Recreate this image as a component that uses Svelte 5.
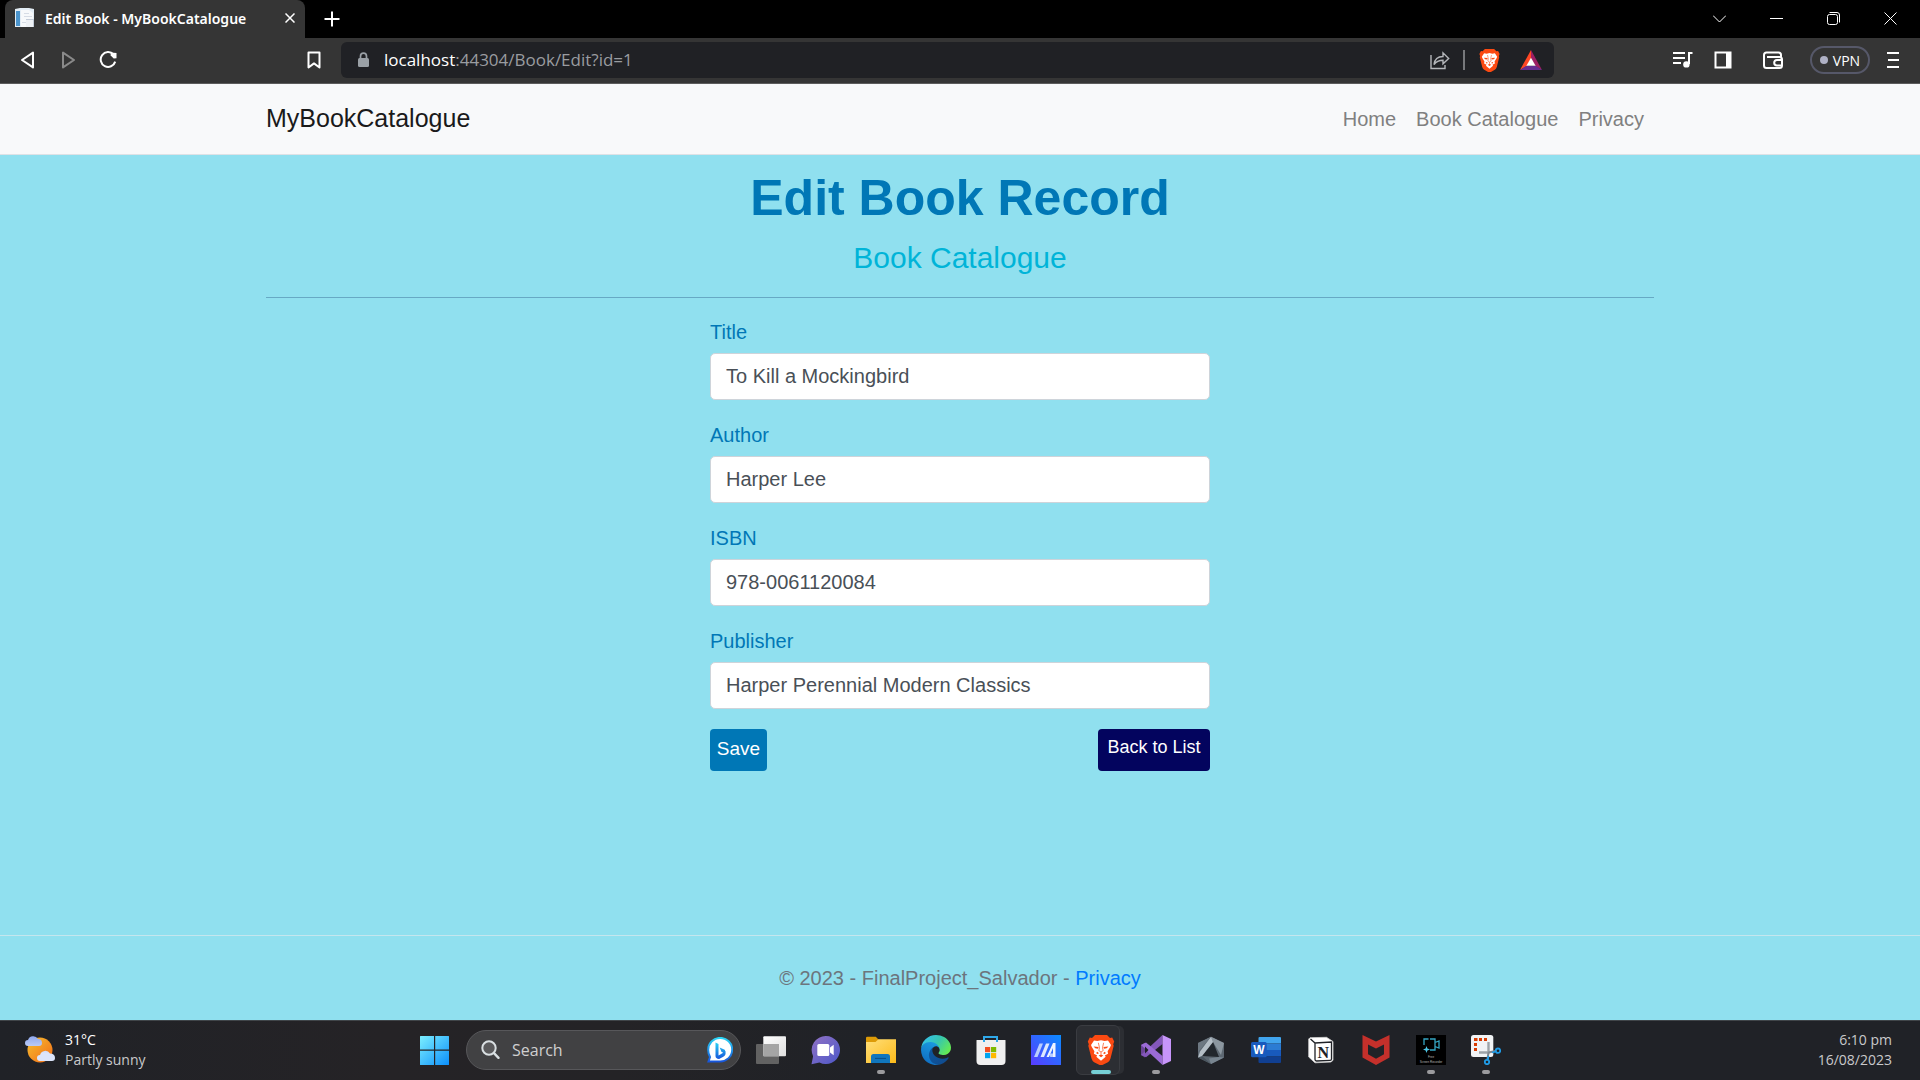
<script>
  let fields = $state([
    { id: 'title', label: 'Title', value: 'To Kill a Mockingbird' },
    { id: 'author', label: 'Author', value: 'Harper Lee' },
    { id: 'isbn', label: 'ISBN', value: '978-0061120084' },
    { id: 'publisher', label: 'Publisher', value: 'Harper Perennial Modern Classics' }
  ]);
  const links = ['Home', 'Book Catalogue', 'Privacy'];
</script>

{#snippet lion()}
  <path fill="#fb4a12" d="M9 0h12l3 3 2.2-.4 2 4-1 2.6.5 1.6-3.2 12.6q-.8 2.6-2.6 3.8l-4.5 2.4q-2.4 1.2-4.8 0l-4.5-2.4q-1.8-1.2-2.6-3.8L2.3 10.8l.5-1.6-1-2.6 2-4L6 3z" />
  <path fill="#fff" d="M8 5.6l3.4.5L15 5.3l3.6.8 3.4-.5 3 4.4-.8 2-2.6 4.2.5 2.6-3.3 1.7.9 1.3-4.7 3.9-4.7-3.9.9-1.3-3.3-1.7.5-2.6-2.6-4.2-.8-2z" />
  <path fill="#fb4a12" d="M7.6 11.4l5 .5-.5 1.9-2.8-.5zM22.4 11.4l-5 .5.5 1.9 2.8-.5zM11.2 16.8l1.8 1.4-1.8.8-1-1.1zM18.8 16.8l-1.8 1.4 1.8.8 1-1.1zM12.7 20.6l2.3-1 2.3 1-2.3 1.700z" />
  <path fill="none" stroke="#fb4a12" stroke-width=".7" d="M12.4 7.8l1.1 5-.7 2.800L15 17l2.200-1.400-.7-2.800 1.100-5M15 17v2.600" />
{/snippet}

<div class="desktop">
  <div class="tabs">
    <div class="tab">
      <svg class="fav" viewBox="0 0 20 20"><path fill="#e3edf5" d="M0 1l5-1h9l5 1v18H0z" /><path fill="#4b94cc" d="M1 3h4v15H1z" /><path fill="#f7f9fb" d="M6 2h8l4 3v14H6z" /><path fill="#d6dce5" d="M9 5h5v1H9zM9 8h8v1H9zM7 14h5v1H7z" /><path fill="#c3ccd8" d="M11 11h8v8h-8z" /><path fill="#eef1f5" d="M11 12h7v7h-7z" /></svg>
      <span class="tabname">Edit Book - MyBookCatalogue</span>
      <button class="plain x" aria-label="Close tab"><svg width="10" height="10" viewBox="0 0 10 10"><path class="ln" d="M0.5 0.5l9 9M9.5 0.5l-9 9" /></svg></button>
    </div>
    <button class="plain new" aria-label="New tab"><svg width="16" height="16" viewBox="0 0 16 16"><path class="ln2" d="M8 0.5v15M0.5 8h15" /></svg></button>
    <div class="win">
      <button class="plain" aria-label="Search tabs"><svg width="13" height="13" viewBox="0 0 13 13"><path class="thin" d="M0 3.5l6.5 6.5L13 3.5" /></svg></button>
      <button class="plain" aria-label="Minimize"><svg width="13" height="13" viewBox="0 0 13 13"><path class="thin" d="M0 6.5h13" /></svg></button>
      <button class="plain" aria-label="Restore"><svg width="13" height="13" viewBox="0 0 13 13"><rect class="thin" x=".5" y="2.5" width="10" height="10" rx="2" /><path class="thin" d="M2.5.5H10q2.5 0 2.5 2.5v7.5" /></svg></button>
      <button class="plain" aria-label="Close"><svg width="13" height="13" viewBox="0 0 13 13"><path class="thin" d="M.5.5l12 12M12.5.5l-12 12" /></svg></button>
    </div>
  </div>

  <div class="toolbar">
    <div class="navs">
      <button class="plain" aria-label="Back"><svg width="18" height="18" viewBox="0 0 18 18"><path class="ln2" stroke-linejoin="round" d="M14 1.6v14.8L3 9z" /></svg></button>
      <button class="plain dim" aria-label="Forward"><svg width="18" height="18" viewBox="0 0 18 18"><path class="ln2" stroke-linejoin="round" d="M4 1.6v14.8L15 9z" /></svg></button>
      <button class="plain" aria-label="Reload"><svg width="18" height="18" viewBox="0 0 18 18"><path class="ln2" d="M14.5 3.4A7.4 7.4 0 1 0 16.2 10.6" /><path fill="#fff" d="M11.6 1.6L17.5 2v5.2l-2.8.2-3-2.8z" /></svg></button>
    </div>
    <button class="plain mark" aria-label="Bookmark"><svg width="14" height="18" viewBox="0 0 14 18"><path class="ln2" stroke-linejoin="round" d="M1.5 1.5h11v15L7 12.4l-5.5 4.1z" /></svg></button>
    <div class="address">
      <svg width="11" height="16" viewBox="0 0 11 16"><rect y="6" width="11" height="9" rx="1.5" fill="#9aa0a6" /><path fill="none" stroke="#9aa0a6" stroke-width="1.7" d="M2.5 7V4.2a3 3 0 0 1 6 0V7" /></svg>
      <span class="url"><b>localhost</b>:44304/Book/Edit?id=1</span>
      <button class="plain" aria-label="Share"><svg width="20" height="20" viewBox="0 0 20 20"><path fill="none" stroke="#b4b6ba" stroke-width="1.4" d="M1 5v13.5h14V15M4 14.5q1-8 9-8V2.8l5.7 5.6L13 13.8v-3.6q-6 0-9 4.3z" /></svg></button>
      <i class="bar"></i>
      <button class="plain shield" aria-label="Brave Shields"><svg width="23" height="23" viewBox="0 0 30 30">{@render lion()}</svg></button>
      <button class="plain bat" aria-label="Rewards"><svg width="22" height="20" viewBox="0 0 22 20"><path fill="#ff4724" d="M11 0L0 20l7-4 4-7.5z" /><path fill="#9e1f63" d="M11 0l11 20-7-4-4-7.5z" /><path fill="#662d91" d="M0 20h22l-6-4H6z" /><path fill="#fff" d="M11 7.7l4.6 8H6.4z" /></svg></button>
    </div>
    <div class="tools">
      <button class="plain" aria-label="Media"><svg width="20" height="18" viewBox="0 0 20 18"><path class="ln2" d="M0 2h12M0 7h12M0 12h8M19.5 2H16v11" /><circle cx="13.4" cy="13.4" r="3.2" fill="#fff" /></svg></button>
      <button class="plain panel" aria-label="Side panel"><svg width="18" height="18" viewBox="0 0 18 18"><rect x="1.5" y="1.5" width="15" height="15" class="ln2" /><path fill="#fff" d="M12 1h5v16h-5z" /></svg></button>
      <button class="plain wallet" aria-label="Wallet"><svg width="20" height="18" viewBox="0 0 20 18"><path class="ln2" d="M18 6V4Q18 1.500 15.500 1.500H3.500Q1 1.500 1 4v10.500Q1 17 3.500 17h13Q19 17 19 14.500V8.500Q19 6 16.500 6H4" /><path class="ln2" d="M19 9h-5a2.800 2.800 0 0 0 0 5.600h5" /></svg></button>
      <button class="vpn"><i></i>VPN</button>
      <button class="plain menu" aria-label="Menu"><svg width="12" height="18" viewBox="0 0 12 18"><path class="ln2" d="M0 2h12M1 9h11M0 16h12" /></svg></button>
    </div>
  </div>

  <div class="page">
    <header>
      <div class="container bar-row">
        <a class="brand" href="#home">MyBookCatalogue</a>
        <nav>
          {#each links as l}<a href="#{l}">{l}</a>{/each}
        </nav>
      </div>
    </header>
    <main class="container">
      <h1>Edit Book Record</h1>
      <h4>Book Catalogue</h4>
      <hr />
      <form onsubmit={(e) => e.preventDefault()}>
        {#each fields as f}
          <div class="field">
            <label for={f.id}>{f.label}</label>
            <input id={f.id} type="text" bind:value={f.value} />
          </div>
        {/each}
        <div class="actions">
          <button class="save" type="submit">Save</button>
          <a class="back" href="#list">Back to List</a>
        </div>
      </form>
    </main>
    <footer>© 2023 - FinalProject_Salvador - <a href="#privacy">Privacy</a></footer>
  </div>

  <div class="taskbar">
    <div class="weather">
      <svg width="30" height="30" viewBox="0 0 30 30"><defs><linearGradient id="sun" x1="0" y1="0" x2="1" y2="1"><stop stop-color="#f5bf2f" /><stop offset="1" stop-color="#f36b16" /></linearGradient><linearGradient id="cl" x1="0" y1="0" x2="0" y2="1"><stop stop-color="#8fa8ee" /><stop offset=".7" stop-color="#dce5fb" /></linearGradient></defs><circle cx="15" cy="15" r="12.500" fill="url(#sun)" /><path fill="url(#cl)" d="M3 11a3 3 0 0 1 0-6 5.500 5.500 0 0 1 10-1q4 0 4 4 0 3-3 3zM15 26a3 3 0 0 1 0-6 5.500 5.500 0 0 1 10-1.500q5 0 5 4.500 0 3-3 3z" /></svg>
      <div><span class="temp">31°C</span><span>Partly sunny</span></div>
    </div>
    <div class="apps">
      <button class="app" aria-label="Start"><svg viewBox="0 0 30 30"><defs><linearGradient id="st" x1="0" y1="0" x2="1" y2="1"><stop stop-color="#7cefff" /><stop offset="1" stop-color="#0c8ffb" /></linearGradient></defs><path fill="url(#st)" d="M0 1.500Q0 1 .5 1h13.500v13.600H0zM15.200 1h13.300q.5 0 .5.500v13.100H15.200zM0 15.800h14V30H.5q-.5 0-.5-.5zM15.200 15.800H29v13.700q0 .5-.5.5H15.200z" /></svg></button>
      <button class="search">
        <svg width="19" height="20" viewBox="0 0 19 20"><circle cx="8" cy="8" r="6.700" fill="#ffffff22" stroke="#d9dfe2" stroke-width="2" /><path stroke="#d9dfe2" stroke-width="2.400" stroke-linecap="round" d="M13 13.200l4.500 4.600" /></svg>
        <span>Search</span>
        <svg width="26" height="26" viewBox="0 0 26 26"><defs><linearGradient id="bg" x1="0" y1="0" x2="0" y2="1"><stop stop-color="#2bd4f4" /><stop offset="1" stop-color="#1756dc" /></linearGradient></defs><path fill="#fff" stroke="url(#bg)" stroke-width="2" d="M1.200 13A12 11.800 0 1 1 13 24.500H1.500L3 20q-1.800-3-1.800-7z" /><path fill="url(#bg)" d="M8.500 5.500l3 1.500v11.500l6.800-4q1.200 3.600-2 5.200l-4.200 2.200q-3.600-.3-3.600-3zM12.700 10.500l5 2.200q1.700 2 .3 4l-3.600-2z" /></svg>
      </button>
      <button class="app" aria-label="Task view"><svg viewBox="0 0 30 30"><defs><linearGradient id="tv" x1="0" y1="0" x2="1" y2="1"><stop stop-color="#fff" /><stop offset="1" stop-color="#dedede" /></linearGradient></defs><rect y="9" width="23" height="20" rx="1" fill="#626262" /><rect x="7.300" y="1.300" width="22.700" height="20" rx="1" fill="url(#tv)" /><path fill="#a5a5a5" d="M7.300 9H23v12.300H7.300z" /></svg></button>
      <button class="app" aria-label="Chat"><svg viewBox="0 0 30 30"><defs><linearGradient id="ch" x1="0" y1="0" x2="1" y2="1"><stop stop-color="#9172c4" /><stop offset="1" stop-color="#4c57c9" /></linearGradient></defs><path fill="url(#ch)" d="M15 1a14 14 0 1 1-6.500 26.400L.5 29.200l1.600-8A14 14 0 0 1 15 1z" /><rect x="6.300" y="9" width="12" height="12" rx="1.500" fill="#fff" /><path fill="#fff" d="M19 12.500l3.700-2.800v10.600L19 17.500z" /></svg></button>
      <button class="app run" aria-label="File Explorer"><svg viewBox="0 0 30 30"><defs><linearGradient id="fo" x1="0" y1="0" x2="1" y2="1"><stop stop-color="#ffdf7a" /><stop offset="1" stop-color="#fcba19" /></linearGradient></defs><path fill="#dd9b07" d="M0 3q0-1.300 1.300-1.300h8.500L12.500 4.500V10H0z" /><path fill="url(#fo)" d="M0 7h9.500l3-2.700H30V28H0z" /><path fill="#1076bd" d="M5 28v-6.500q0-2.500 2.500-2.500h14q2.500 0 2.500 2.500V28z" /><path stroke="#0a4f87" stroke-width="1" d="M9 23.400h11" /></svg></button>
      <button class="app" aria-label="Edge"><svg viewBox="0 0 256 256"><defs><linearGradient id="e1" x1="0" y1="0" x2="1" y2="1"><stop stop-color="#0c59a4" /><stop offset="1" stop-color="#114a8b" /></linearGradient><linearGradient id="e2" x1=".7" y1="0" x2=".3" y2="1"><stop stop-color="#1b9de2" /><stop offset="1" stop-color="#0f6cc0" /></linearGradient><linearGradient id="e3" x1="0" y1=".2" x2="1" y2=".7"><stop stop-color="#35c1f1" /><stop offset=".5" stop-color="#36c6b0" /><stop offset="1" stop-color="#66eb4f" /></linearGradient></defs><path fill="url(#e1)" d="M231 190.500c-3.400 1.800-6.900 3.400-10.500 4.700a101.500 101.500 0 0 1-35.800 6.400c-47.200 0-88.300-32.400-88.300-74.100a31.600 31.600 0 0 1 16.400-27.500c-42.700 1.800-53.700 46.300-53.700 72.400 0 73.700 67.900 81.200 82.500 81.200 7.900 0 19.800-2.300 27-4.600l1.300-.4A128.300 128.300 0 0 0 236 195.300a4 4 0 0 0-5-4.800z" /><path fill="url(#e2)" d="M105.700 241.400A79.200 79.200 0 0 1 83 220a80.700 80.700 0 0 1 29.600-120c3.200-1.400 8.500-4.100 15.600-4 10.200.1 19.800 5 25.800 13.200a31.800 31.800 0 0 1 6.400 18.700c0-.2 24.500-79.600-80-79.600-44 0-80.100 41.700-80.100 78.200a130.200 130.200 0 0 0 12.100 56 128.200 128.200 0 0 0 156.400 67.100 75.500 75.500 0 0 1-62.800-8.200z" /><path fill="url(#e3)" d="M152.400 148.900c-.9 1-3.400 2.500-3.400 5.600 0 2.600 1.700 5.200 4.800 7.300 14.300 10 41.400 8.600 41.500 8.600 10.700 0 21.100-2.900 30.300-8.300a61.400 61.400 0 0 0 30.400-52.900c.3-22.400-8-37.300-11.300-43.900C223.400 23.800 177.700 0 128 0A128 128 0 0 0 0 126.200c.5-36.500 36.800-66 80-66 3.500 0 23.500.3 42 10a72.600 72.600 0 0 1 30.900 29.300c6.100 10.600 7.200 24.100 7.200 29.500s-2.700 13.300-7.700 19.900z" /></svg></button>
      <button class="app" aria-label="Microsoft Store"><svg viewBox="0 0 30 30"><path fill="none" stroke="#2fa9ea" stroke-width="2" d="M8 7V2h13v5" /><path fill="#f0f0f0" d="M1 5h28q.5 0 .5.500V26q0 4-4 4h-21q-4 0-4-4V5.500Q.5 5 1 5z" /><path fill="none" stroke="#2fa9ea" stroke-width="2" d="M8 7V4M21 7V4" /><path fill="#f25022" d="M9 12h5.200v5.200H9z" /><path fill="#7fba00" d="M15 12h5.200v5.200H15z" /><path fill="#00a4ef" d="M9 18h5.200v5.200H9z" /><path fill="#ffb900" d="M15 18h5.200v5.200H15z" /></svg></button>
      <button class="app" aria-label="MyASUS"><svg viewBox="0 0 30 30"><defs><linearGradient id="as" x1="0" y1="1" x2="1" y2="0"><stop stop-color="#5a3bff" /><stop offset="1" stop-color="#0a8cff" /></linearGradient></defs><path fill="url(#as)" d="M0 0h30v30H0z" /><path fill="#b9cdff" d="M3 22L8.500 8.500H12L6.500 22z" /><path fill="#dce7ff" d="M9.500 22L15 8.500h3.500L13 22z" /><path fill="#eef4ff" d="M15.500 22l6.500-14h2.500v14h-2.500v-9L18 22z" /><path fill="#b9cdff" d="M18.800 18.500H22V22h-2.800z" /></svg></button>
      <button class="app active" aria-label="Brave"><svg viewBox="0 0 30 30">{@render lion()}</svg></button>
      <button class="app run" aria-label="Visual Studio"><svg viewBox="0 0 30 30"><path fill="#6b4497" d="M0 10l4-2.300V22.500L0 20z" /><path fill="#8458bb" d="M21.500 0v9L5 22.300 0 20z" /><path fill="#9b6bd6" d="M21.500 30v-9L5 7.500 0 10z" /><path fill="#c795fa" d="M21.500 0L30 4v22l-8.500 4z" /><path fill="#202227" d="M4 11.500v7L7.500 15z" /></svg></button>
      <button class="app" aria-label="Armoury Crate"><svg viewBox="0 0 30 30"><path fill="#5d6872" d="M15 1.700L28 8v14.500L15 29 2 22.500V8z" /><path fill="#8b969f" d="M15 1.700L28 8l-3 12-8-13z" /><path fill="#788590" d="M28 22.500L15 29l-2-5.500 10-1.500z" /><path fill="#4a555f" d="M2 22.500L6 21l9 8z" /><path fill="#22272d" d="M17 7l6 15-17-1z" /><path fill="#b4bec6" d="M15 1.700L17 7 6 21l-4 1.500 2-6z" /><path fill="#6d7882" d="M15 1.700L2 8v9z" /></svg></button>
      <button class="app" aria-label="Word"><svg viewBox="0 0 30 30"><path fill="#41a5ee" d="M8.500 2H29q1 0 1 1v5.500H7.500V3q0-1 1-1z" /><path fill="#2b7cd3" d="M7.500 8.500H30V15H7.500z" /><path fill="#185abd" d="M7.500 15H30v6.500H7.500z" /><path fill="#103f91" d="M7.500 21.500H30V27q0 1-1 1H8.500q-1 0-1-1z" /><rect y="7" width="15.700" height="15.300" rx="1.500" fill="#185abd" /><text class="w" x="8" y="19" text-anchor="middle">W</text></svg></button>
      <button class="app" aria-label="Notion"><svg viewBox="0 0 30 30"><path fill="#fff" stroke="#d0d0d0" stroke-width=".8" d="M4 2.700l16.500-.4L27 6.500v18.800l-2 1.700-16 .8L2.700 22V4z" /><path fill="#fff" stroke="#202227" stroke-width="1.300" d="M4.500 4L9 8l16.500-1v17q0 1.300-1.300 1.300l-13.700.7q-1.500 0-1.500-1.400V8" /><text class="n" x="17.300" y="22.500" text-anchor="middle">N</text></svg></button>
      <button class="app" aria-label="McAfee"><svg viewBox="0 0 30 30"><path fill="#c4302b" fill-rule="evenodd" d="M1.500 0L15 6.500 28.500 0v22.500L15 30 1.500 22.500zM7 9.500v9.800l8 4.400 8-4.400V9.500l-8 4z" /></svg></button>
      <button class="app run" aria-label="Free Screen Recorder"><svg viewBox="0 0 30 30"><path fill="#000" d="M0 0h30v30H0z" /><path fill="none" stroke="#35a6c4" stroke-width="1.300" d="M8 10V4h4.500M14 4h5v11h-5M19 7.500l4-1.500v7l-4-1.500" /><path fill="#4cc5e4" d="M10.500 11l.9 2.600 2.600.9-2.600.9-.9 2.600-.9-2.600-2.600-.9 2.600-.9z" /><text class="tiny" x="15" y="23" text-anchor="middle">Free</text><text class="tiny" x="15" y="27.500" text-anchor="middle">Screen Recorder</text></svg></button>
      <button class="app run" aria-label="Snipping Tool"><svg viewBox="0 0 30 30"><rect width="22.300" height="22" rx="2.500" fill="#f1f3f5" /><path fill="#d83b01" d="M3 3h3.500v3H3zM8 3h3v3H8zM13 3h3v3h-3zM3 8h3v3H3zM3 13h3v3H3z" /><path fill="none" stroke="#9da3a8" stroke-width="2.400" d="M17.500 7v10.500H8" /><path stroke="#808890" stroke-width="2" d="M17.500 17.500l7-1.500M17.500 17.500L16.500 24" /><g fill="none" stroke="#1f9ce8" stroke-width="1.800"><circle cx="27" cy="15.700" r="2.200" /><circle cx="16" cy="27" r="2.200" /><path d="M21 17.500l4-1M17.500 21l-.8 4" /></g></svg></button>
    </div>
    <div class="clock"><span>6:10 pm</span><span>16/08/2023</span></div>
  </div>
</div>

<style>
  :global(body) { margin: 0; }
  .desktop { min-height: 100vh; display: flex; flex-direction: column; font-family: "Open Sans", "Noto Sans", sans-serif; background: #90e0ef; }
  .desktop * { box-sizing: border-box; }
  svg { display: block; flex: none; }
  a { text-decoration: none; }
  .plain { border: 0; padding: 0; background: none; display: flex; align-items: center; justify-content: center; }
  .ln, .ln2, .thin { fill: none; stroke: #fff; stroke-width: 1.5; }
  .ln2 { stroke-width: 2; }
  .thin { stroke-width: 1; }
  .dim .ln2 { stroke: #8a8a8a; }

  .tabs { height: 38px; background: #000; display: flex; padding-left: 5px; }
  .tab { width: 300px; background: #353535; border-radius: 8px 8px 0 0; display: flex; align-items: center; padding: 0 10px 2px; color: #fff; font-family: "Noto Sans", sans-serif; font-size: 14px; font-weight: 600; }
  .fav { width: 20px; height: 20px; margin-right: 10px; }
  .tabname { flex: 1; white-space: nowrap; }
  .new { width: 54px; }
  .win { margin-left: auto; display: flex; padding: 0 1px 2px 0; }
  .win button { width: 57px; }

  .toolbar { height: 46px; background: #353535; border-bottom: 1px solid #5c5c5c; display: flex; align-items: center; padding: 0 21px 1px 0; }
  .navs { display: flex; padding-left: 19px; gap: 22px; }
  .mark { margin-left: 190px; margin-right: 20px; }
  .address { flex: 1; height: 36px; border-radius: 6px; background: #202125; display: flex; align-items: center; padding: 0 12px 0 17px; margin-right: 119px; }
  .url { flex: 1; padding-left: 15px; color: #9a9ca0; font-size: 17px; line-height: 24px; white-space: nowrap; }
  .url b { font-weight: 400; color: #fff; }
  .bar { width: 2px; height: 20px; background: #77797c; margin: 0 13px; }
  .bat { margin-left: 19px; }
  .tools { display: flex; align-items: center; }
  .panel { margin-left: 21px; }
  .wallet { margin-left: 31px; }
  .vpn { margin: 0 17px 0 27px; width: 60px; height: 28px; border: 2px solid #565869; border-radius: 14px; background: none; color: #fff; font: 14px "Open Sans", sans-serif; display: flex; align-items: center; justify-content: center; gap: 5px; padding: 0; }
  .vpn i { width: 8px; height: 8px; border-radius: 50%; background: #afb1c5; }

  .page { flex: 1; display: flex; flex-direction: column; font-family: "Liberation Sans", Arial, sans-serif; font-size: 20px; line-height: 30px; }
  .container { width: 100%; max-width: 1388px; margin: 0 auto; }
  header { background: #f8f9fa; border-bottom: 1px solid #dee2e6; }
  .bar-row { height: 70px; display: flex; align-items: center; justify-content: space-between; }
  .brand { font-size: 25px; color: #1a1a1a; padding-bottom: 2px; }
  nav { display: flex; gap: 20px; padding-right: 10px; }
  nav a { color: #808080; }
  main { flex: 1; padding-top: 13px; }
  h1, h4 { margin: 0; text-align: center; }
  h1 { font-size: 50px; line-height: 60px; color: #0077b6; }
  h4 { font-size: 30px; line-height: 36px; font-weight: 400; color: #00b4d8; margin-top: 12px; }
  hr { border: 0; border-top: 1px solid #67a9c4; margin: 21px 0 19px; }
  form { max-width: 500px; margin: 0 auto; display: flex; flex-direction: column; gap: 20px; }
  .field { display: flex; flex-direction: column; gap: 6px; }
  label { color: #0077b6; }
  input { height: 47px; border: 1px solid #ced4da; border-radius: 5px; background: #fff; color: #495057; font: inherit; padding: 0 15px; }
  .actions { display: flex; justify-content: space-between; }
  .save, .back { height: 42px; border: 0; border-radius: 4px; color: #fff; text-align: center; }
  .save { width: 57px; padding: 0 0 3px; background: #0077b6; font: 19px "Liberation Sans", Arial, sans-serif; }
  .back { width: 112px; background: #03045e; font-size: 18px; line-height: 36px; }
  footer { height: 85px; border-top: 1px solid #c5e6ee; text-align: center; line-height: 84px; color: #6c757d; }
  footer a { color: #007bff; }

  .taskbar { height: 60px; background: linear-gradient(90deg, #202227, #252326 20%, #242326 32%, #202227 45%); box-shadow: inset 0 1px #404549; display: grid; grid-template-columns: 1fr auto 1fr; align-items: center; color: #c9c9cb; font-size: 14px; line-height: 20px; padding-bottom: 1px; }
  .weather { display: flex; align-items: center; gap: 10px; padding-left: 25px; }
  .weather span, .clock span { display: block; }
  .weather .temp { color: #fff; }
  .clock { padding-right: 28px; text-align: right; }
  .apps { display: flex; align-items: center; }
  .app { position: relative; width: 55px; height: 50px; border: 0; padding: 0 12px; background: none; }
  .app svg { width: 30px; height: 30px; margin: 0 auto; }
  .run::after, .active::after { content: ""; position: absolute; left: 50%; bottom: 1px; width: 8px; height: 4px; margin-left: -4px; border-radius: 2px; background: #9b9b9e; }
  .active::after { width: 20px; margin-left: -10px; background: #76d0d6; }
  .active::before { content: ""; position: absolute; inset: 0 8px 0 3px; z-index: -1; border: 1px solid #3a3c41; border-radius: 6px; background: #2c2e33; box-shadow: 5px 0 0 -1px #2c2e33; }
  .active { z-index: 0; }
  .search { width: 275px; height: 40px; margin: 0 2px 0 4px; border: 1px solid #57575a; border-radius: 20px; background: #414143; display: flex; align-items: center; padding: 0 7px 0 14px; color: #cfcfd0; font: 16px "Open Sans", sans-serif; }
  .search span { flex: 1; text-align: left; padding-left: 12px; }
  .w { font: bold 12px "Liberation Sans", sans-serif; fill: #fff; }
  .n { font: bold 16px "Liberation Serif", serif; fill: #202227; }
  .tiny { font: 3px "Liberation Sans", sans-serif; fill: #bbb; }
</style>
